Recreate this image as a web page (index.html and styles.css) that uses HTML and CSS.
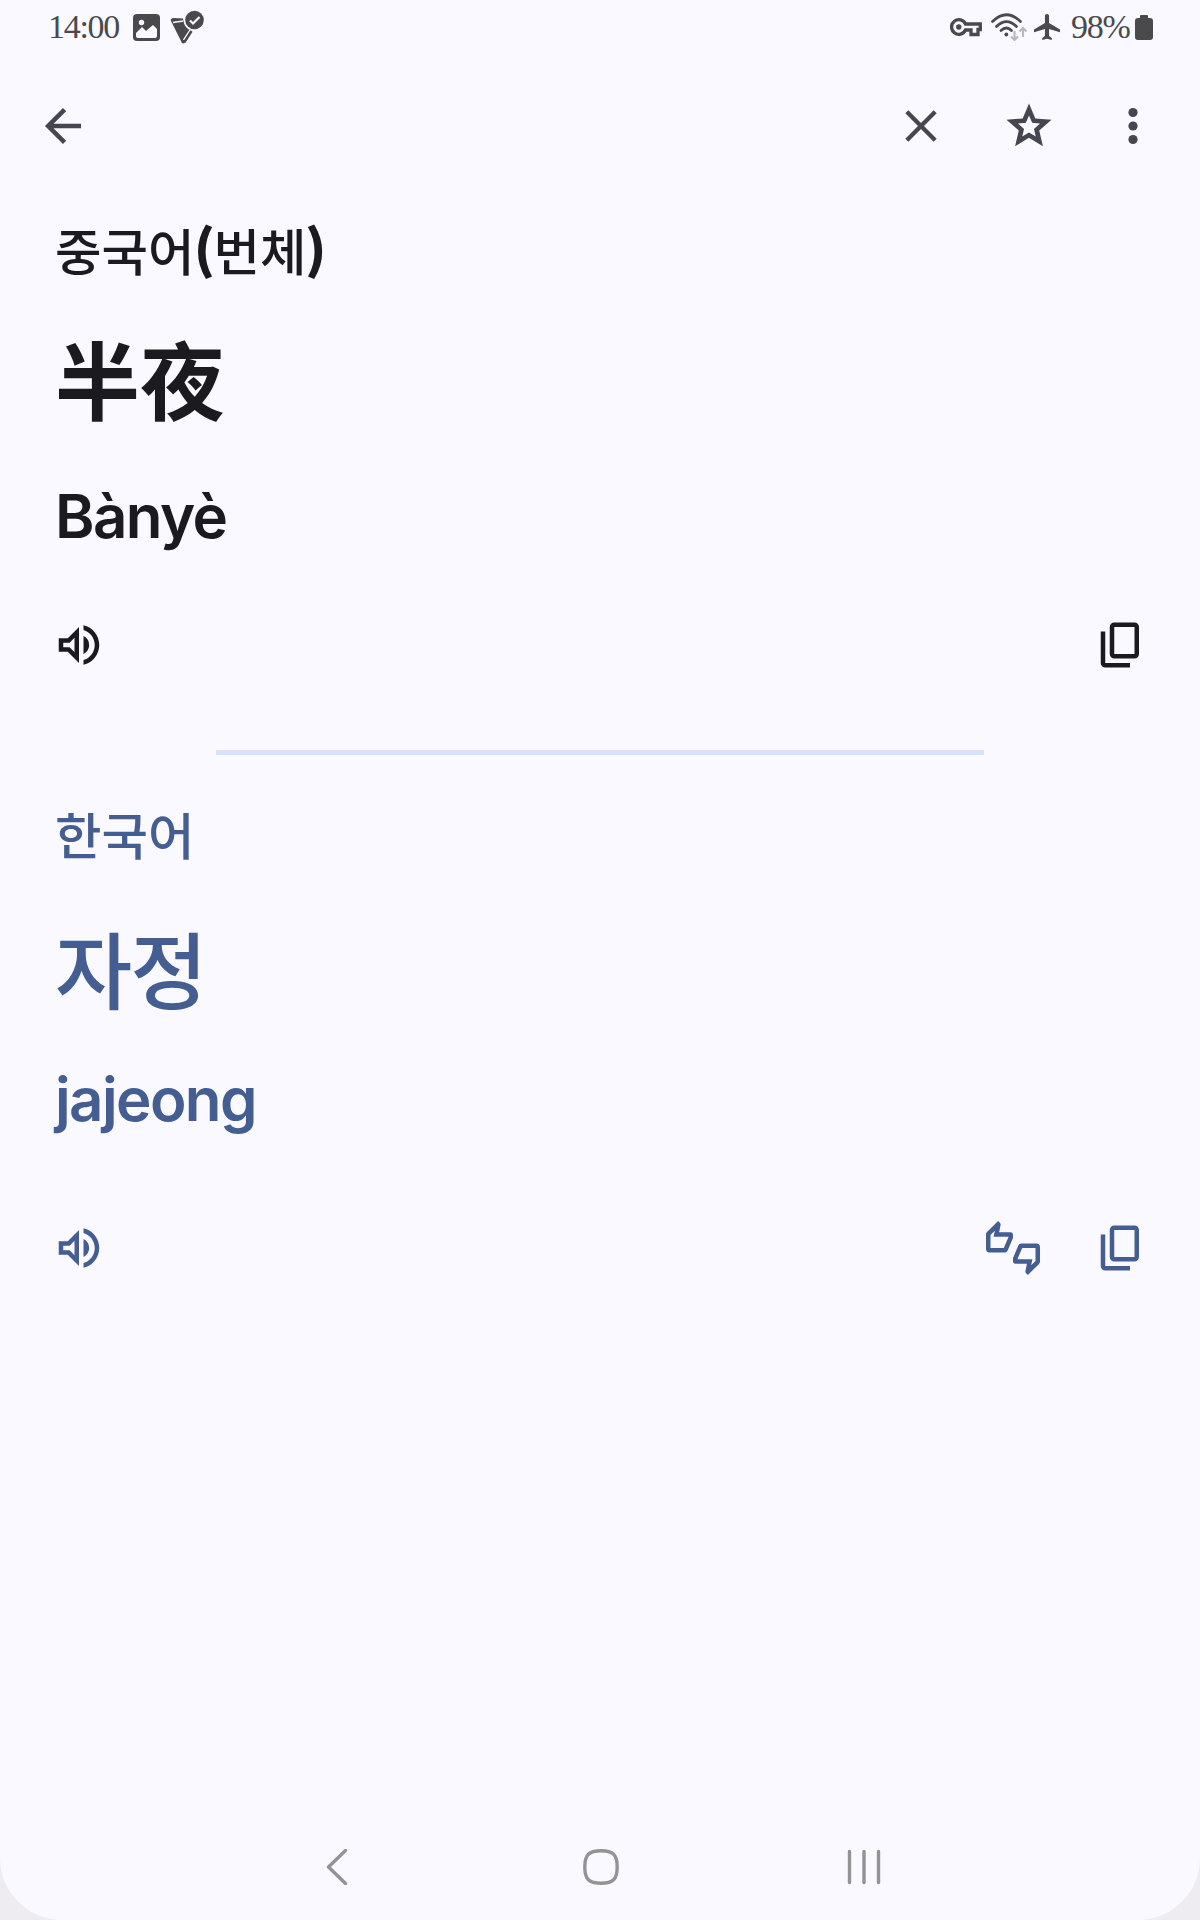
FILE: index.html
```html
<!DOCTYPE html>
<html lang="ko">
<head>
    <meta charset="UTF-8">
    <meta name="viewport" content="width=device-width, initial-scale=1.0">
    <title>번역</title>
    <link rel="stylesheet" href="styles.css">
</head>
<body>
<div class="screen">

    <div class="status-bar">
        <span class="clock">14:00</span>
        <svg class="photo" width="27" height="27" viewBox="0 0 27 27">
            <rect width="27" height="27" rx="4" fill="currentColor"/>
            <circle cx="8.500" cy="8.500" r="2.700" fill="#faf9ff"/>
            <path d="M3 22v-3l6-6 4 4 7-6 4 4v7q0 2-2 2H5q-2 0-2-2z" fill="#faf9ff"/>
        </svg>
        <svg class="check" width="34" height="34" viewBox="0 0 34 34">
            <path d="M1 11q-1-3 3-3l9 .5q1 6 8 10l-6 14q-1 1.500-3 .5z" fill="currentColor"/>
            <path d="M3 12.500l10-1.500" stroke="#faf9ff" stroke-width="1.600"/>
            <path d="M15 31l8-12" stroke="#faf9ff" stroke-width="5"/>
            <path d="M14.500 32l7-11" stroke="currentColor" stroke-width="2.500"/>
            <circle cx="24.500" cy="10" r="11" fill="#faf9ff"/>
            <circle cx="24.500" cy="10" r="9.300" fill="currentColor"/>
            <path d="M20 10.500l3 3 6.500-6.500" fill="none" stroke="#faf9ff" stroke-width="2.200"/>
        </svg>
        <span class="spacer"></span>
        <svg class="key" width="32" height="19" viewBox="0 0 32 19">
            <path d="M15.500 6H30.300V11.500H28V16.500H21V12H15.500A7.300 7.300 0 1 1 15.500 6z" fill="none" stroke="currentColor" stroke-width="3.300"/>
            <circle cx="8.800" cy="9" r="2.700" fill="currentColor"/>
        </svg>
        <svg class="wifi" width="38" height="28" viewBox="0 0 38 28">
            <g fill="none" stroke="currentColor" stroke-width="2.700" stroke-linecap="round">
                <path d="M1.500 8.500Q15.500-5 29.500 8.500"/>
                <path d="M5.500 13.500Q15.500 3.500 25.500 13.500"/>
                <path d="M10 17.500Q15.500 12.500 20.500 17.500"/>
            </g>
            <circle cx="15.300" cy="21.500" r="1.900" fill="currentColor"/>
            <path d="M23.500 18v8.500m-3.500-3 3.500 3.500 3.500-3.500M32 24v-8.500m-3.500 3L32 15l3.500 3.500" fill="none" stroke="#b9b9bb" stroke-width="2.100"/>
        </svg>
        <svg class="plane" width="26" height="26" viewBox="2 2 19 20" preserveAspectRatio="none">
            <path d="M21 16v-2l-8-5V3.500c0-.83-.67-1.500-1.500-1.500S10 2.670 10 3.500V9l-8 5v2l8-2.500V19l-2 1.500V22l3.500-1 3.500 1v-1.500L13 19v-5.500l8 2.500z" fill="currentColor"/>
        </svg>
        <span class="percent">98%</span>
        <svg width="18" height="25" viewBox="0 0 18 25">
            <path d="M5 3V1q0-1 1-1h6q1 0 1 1v2h2q3 0 3 3v16q0 3-3 3H3q-3 0-3-3V6q0-3 3-3z" fill="currentColor"/>
        </svg>
    </div>

    <div class="toolbar">
        <svg class="icon" viewBox="0 0 24 24"><path d="M20 12H5M12.700 4.700 5.400 12l7.300 7.300" fill="none" stroke="currentColor" stroke-width="2"/></svg>
        <span class="spacer"></span>
        <svg class="icon" viewBox="0 0 24 24"><path d="M5.700 5.700l12.600 12.600M18.300 5.700L5.700 18.300" stroke="currentColor" stroke-width="1.900"/></svg>
        <svg class="icon" viewBox="0 0 24 24"><path d="M22 9.240l-7.190-.62L12 2 9.190 8.630 2 9.240l5.460 4.730L5.820 21 12 17.270 18.180 21l-1.630-7.030L22 9.240zM12 14.900L9 16.700l.8-3.400-2.700-2.400 3.500-.3L12 7.300l1.400 3.300 3.500.3-2.700 2.400.8 3.400L12 14.900z"/></svg>
        <svg class="icon" viewBox="0 0 24 24"><circle cx="12" cy="6" r="2.050"/><circle cx="12" cy="12" r="2.050"/><circle cx="12" cy="18" r="2.050"/></svg>
    </div>

    <div class="source">
        <div class="lang">중국어<span class="paren">(</span>번체<span class="paren">)</span></div>
        <div class="word hanzi" lang="zh-Hant">半夜</div>
        <div class="roman">Bànyè</div>
        <div class="actions">
            <svg class="icon" viewBox="0 0 24 24"><path d="M3 9v6h4l5 5V4L7 9H3zm7-.17v6.340L7.830 13H5v-2h2.830L10 8.830zM16.500 12A4.500 4.500 0 0 0 14 7.970v8.050c1.480-.73 2.500-2.250 2.500-4.020zM14 3.230v2.060c2.890.86 5 3.540 5 6.710s-2.110 5.850-5 6.710v2.060c4.010-.91 7-4.490 7-8.770s-2.990-7.860-7-8.770z"/></svg>
            <span class="spacer"></span>
            <svg class="icon" viewBox="0 0 24 24"><g fill="none" stroke="currentColor" stroke-width="2"><rect x="8" y="3" width="11" height="14" rx="1"/><path d="M4 6v14a1 1 0 0 0 1 1h11"/></g></svg>
        </div>
    </div>

    <div class="divider"></div>

    <div class="target">
        <div class="lang">한국어</div>
        <div class="word hangul">자정</div>
        <div class="roman">jajeong</div>
        <div class="actions">
            <svg class="icon" viewBox="0 0 24 24"><path d="M3 9v6h4l5 5V4L7 9H3zm7-.17v6.340L7.830 13H5v-2h2.830L10 8.830zM16.500 12A4.500 4.500 0 0 0 14 7.970v8.050c1.480-.73 2.500-2.250 2.500-4.020zM14 3.230v2.060c2.890.86 5 3.540 5 6.710s-2.110 5.850-5 6.710v2.060c4.010-.91 7-4.490 7-8.770s-2.990-7.860-7-8.770z"/></svg>
            <span class="spacer"></span>
            <svg class="icon" viewBox="0 0 24 24"><path d="M12 6c0-.55-.45-1-1-1H5.820l.66-3.180.02-.23c0-.31-.13-.59-.33-.8L5.380 0 .44 4.940C.17 5.210 0 5.590 0 6v6.500c0 .83.67 1.500 1.500 1.500h6.750c.62 0 1.150-.38 1.380-.91l2.260-5.290c.07-.17.11-.36.11-.55V6zm-2 1.130L7.920 12H2V6.210l1.930-1.930L3.360 7H10v.13zM22.500 10h-6.750c-.62 0-1.150.38-1.380.91l-2.260 5.290c-.07.17-.11.36-.11.55V18c0 .55.45 1 1 1h5.180l-.66 3.180-.02.24c0 .31.13.59.33.8l.79.78 4.940-4.940c.27-.27.44-.65.44-1.060v-6.500c0-.83-.67-1.500-1.500-1.500zm-.5 7.790-1.930 1.930.57-2.720H14v-.13L16.080 12H22v5.790z"/></svg>
            <svg class="icon" viewBox="0 0 24 24"><g fill="none" stroke="currentColor" stroke-width="2"><rect x="8" y="3" width="11" height="14" rx="1"/><path d="M4 6v14a1 1 0 0 0 1 1h11"/></g></svg>
        </div>
    </div>

    <div class="nav-bar">
        <svg width="36" height="36" viewBox="0 0 36 36"><path d="M26.500 1.500L9.500 18l17 16.500"/></svg>
        <svg width="36" height="36" viewBox="0 0 36 36"><path d="M18 1.800C30 1.800 34.200 5.500 34.200 18S30 34.200 18 34.200 1.800 30.500 1.800 18 6 1.800 18 1.800z"/></svg>
        <svg width="36" height="36" viewBox="0 0 36 36"><path d="M3.500 2.500v31M18 2.500v31M32.500 2.500v31"/></svg>
    </div>
</div>
</body>
</html>
```
FILE: styles.css
```css
* {
    box-sizing: border-box;
}
body {
    margin: 0;
    background-color: #eeecf1;
}
.screen {
    width: 1200px;
    height: 1920px;
    display: flex;
    flex-direction: column;
    background-color: #faf9ff;
    border-radius: 0 0 62px 62px;
    overflow: hidden;
}
svg {
    flex: none;
    display: block;
}
.spacer {
    flex: 1;
}
.icon {
    width: 54px;
    height: 54px;
    fill: currentColor;
}
.status-bar {
    height: 54px;
    padding: 0 47px 0 48px;
    display: flex;
    align-items: center;
    color: #4a4a4c;
    font-family: "Liberation Serif", serif;
    font-size: 34px;
    line-height: 54px;
}
.clock {
    width: 72px;
    letter-spacing: -1.3px;
    white-space: nowrap;
}
.photo {
    margin-left: 13px;
}
.check {
    margin-left: 10px;
}
.wifi {
    margin-left: 9px;
}
.plane {
    margin-left: 5px;
}
.percent {
    width: 60px;
    margin-left: 11px;
    margin-right: 4px;
    letter-spacing: -1.2px;
    white-space: nowrap;
}
.toolbar {
    height: 144px;
    padding: 0 40px 0 36px;
    display: flex;
    align-items: center;
    gap: 54px;
    color: #45464f;
}
.toolbar .icon:last-child {
    margin-left: -4px;
}
.source,
.target {
    padding: 0 52px;
    font-family: "Noto Sans CJK KR", sans-serif;
}
.source {
    height: 552px;
    color: #1b1b1f;
}
.target {
    padding-top: 23px;
    color: #455e91;
}
.lang {
    height: 108px;
    padding-left: 3px;
    font-size: 50.5px;
    font-weight: 500;
    line-height: 102px;
}
.paren {
    font-weight: 700;
    -webkit-text-stroke: 1.6px currentColor;
}
.word {
    height: 148px;
    padding-left: 3px;
    font-size: 83px;
    font-weight: 700;
    line-height: 150px;
}
.hanzi {
    font-family: "Noto Sans CJK TC", sans-serif;
    font-size: 85px;
    line-height: 142px;
}
.hangul {
    font-size: 84px;
    font-weight: 500;
    line-height: 158px;
    letter-spacing: -2px;
}
.roman {
    height: 104px;
    padding-left: 3px;
    font-family: Inter, sans-serif;
    font-size: 60px;
    font-weight: 600;
    line-height: 124px;
    letter-spacing: -1.6px;
}
.actions {
    height: 54px;
    margin-top: 60px;
    display: flex;
    gap: 54px;
}
.target .lang {
    height: 110px;
    line-height: 110px;
}
.target .roman {
    height: 115px;
    line-height: 126px;
}
.target .actions {
    margin-top: 70px;
}
.divider {
    width: 768px;
    height: 5px;
    margin: 0 auto;
    background-color: #dae2f9;
}
.nav-bar {
    margin-top: auto;
    height: 106px;
    padding: 0 318px 0 319px;
    display: flex;
    align-items: center;
    justify-content: space-between;
}
.nav-bar path {
    fill: none;
    stroke: #939396;
    stroke-width: 3.4;
    stroke-linecap: round;
    stroke-linejoin: round;
}
```
